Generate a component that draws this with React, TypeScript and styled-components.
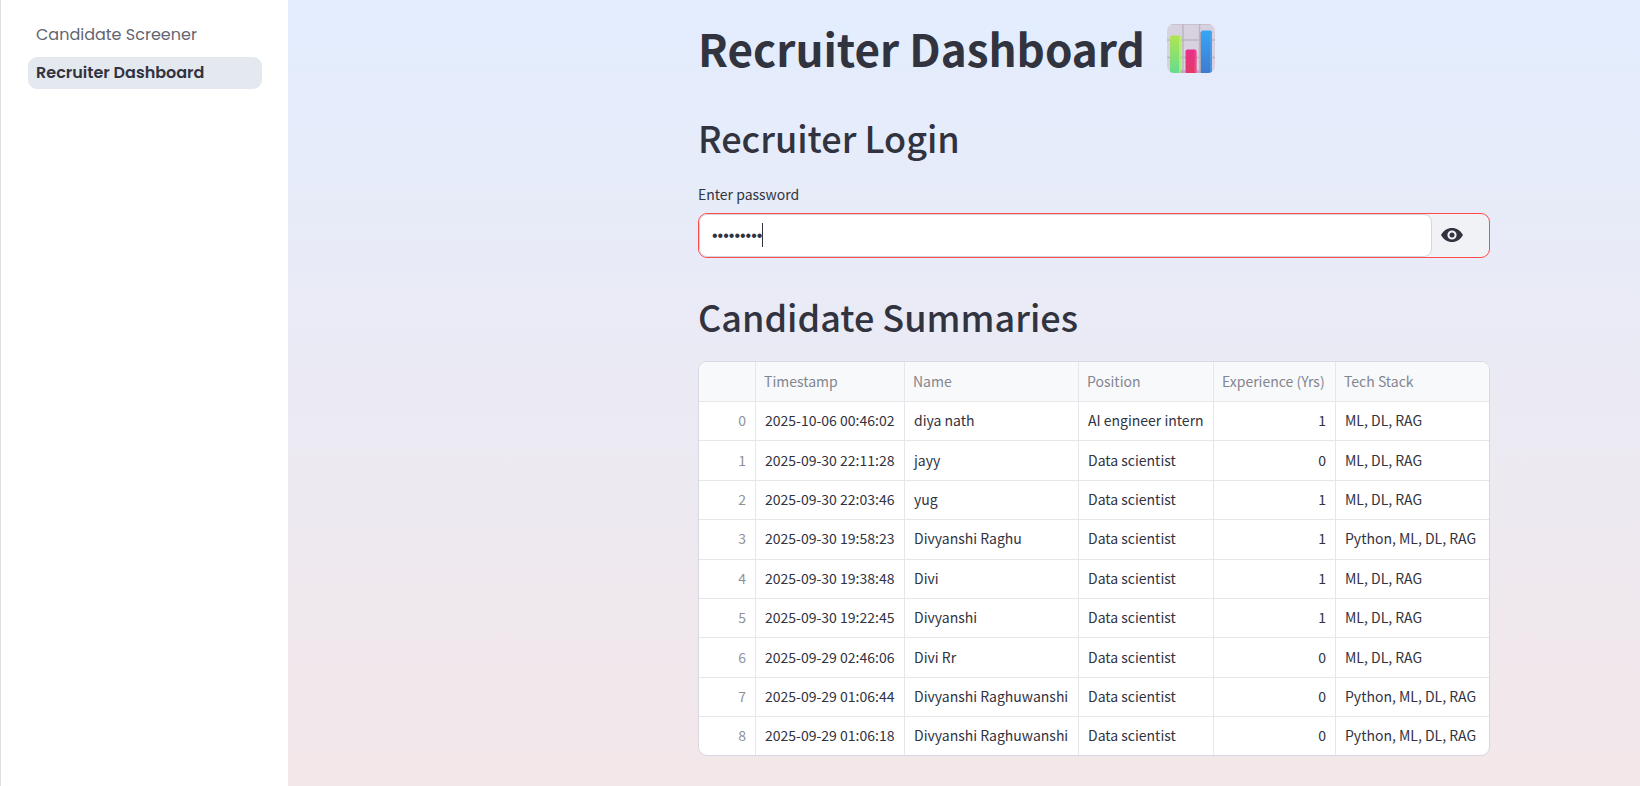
import React, { useState } from 'react';
import styled, { createGlobalStyle } from 'styled-components';

const sans = '"Noto Sans CJK SC", "Noto Sans", sans-serif';
const ink = '#31333f';

const GlobalStyle = createGlobalStyle`
  *, *::before, *::after { box-sizing: border-box; }
  body {
    margin: 0;
    color: ${ink};
    font-family: ${sans};
  }
`;

const Shell = styled.div`
  display: flex;
  min-height: 100vh;
  background: linear-gradient(to bottom, #e3edfe, #f3e7e9);
`;

const Sidebar = styled.aside`
  flex: 0 0 288px;
  padding: 19px 26px 19px 27px;
  border-left: 1px solid #dfe0e4;
  background: #ffffff;
`;

const NavList = styled.nav`
  display: flex;
  flex-direction: column;
  gap: 6px;
`;

const NavLink = styled.a<{ $active?: boolean }>`
  padding: 0 8px;
  border-radius: 9px;
  background: ${(p) => (p.$active ? '#e4e9f0' : 'transparent')};
  color: ${(p) => (p.$active ? ink : '#63656f')};
  font-family: Poppins, Inter, sans-serif;
  font-size: 16px;
  font-weight: ${(p) => (p.$active ? 600 : 400)};
  line-height: 32px;
  white-space: nowrap;
  text-decoration: none;
`;

const Main = styled.main`
  flex: 1;
  display: grid;
  grid-template-columns: 410fr minmax(0, 792px) 150fr;
  align-content: start;
  padding: 18px 0 20px;
`;

const Content = styled.div`
  grid-column: 2;
`;

const Title = styled.h1`
  display: flex;
  align-items: center;
  gap: 22px;
  margin: 0;
  font-size: 44px;
  font-weight: 700;
  line-height: 60px;
  white-space: nowrap;
`;

const SectionTitle = styled.h2<{ $top: number }>`
  margin: ${(p) => p.$top}px 0 0;
  font-size: 36px;
  font-weight: 500;
  line-height: 48px;
`;

const Label = styled.label`
  display: block;
  margin: 21px 0 7px;
  font-size: 14px;
  line-height: 24px;
`;

const PasswordBox = styled.div`
  display: flex;
  height: 45px;
  overflow: hidden;
  border: 1px solid #ff4b4b;
  border-radius: 9px;
  background: #f0f2f6;
`;

const Field = styled.div`
  position: relative;
  flex: 1;
`;

const PasswordInput = styled.input`
  width: 100%;
  height: 100%;
  padding: 0 12px;
  border: 1px solid #d3d6df;
  border-radius: 8px;
  outline: none;
  background: #ffffff;
  color: ${ink};
  caret-color: transparent;
  font-family: "Liberation Sans", sans-serif;
  font-size: 16px;
`;

const Caret = styled.span`
  position: absolute;
  top: 9px;
  left: 63px;
  width: 1px;
  height: 24px;
  background: ${ink};
`;

const RevealButton = styled.button`
  display: flex;
  align-items: center;
  width: 57px;
  padding: 0 0 2px 8px;
  border: 0;
  background: transparent;
  color: ${ink};
`;

const TableFrame = styled.div`
  margin-top: 21px;
  overflow: hidden;
  border: 1px solid #d8d8e2;
  border-radius: 9px;
  background: #ffffff;
`;

const Table = styled.table`
  width: 100%;
  height: 393px;
  border-collapse: separate;
  border-spacing: 0;
  table-layout: fixed;
  font-size: 14px;
  line-height: 20px;
`;

const Cell = styled.td<{ $end?: boolean; $muted?: boolean }>`
  padding: 0 9px 2px;
  border-right: 1px solid #e6e7ea;
  border-bottom: 1px solid #e6e7ea;
  color: ${(p) => (p.$muted ? '#8f929c' : ink)};
  font-weight: 400;
  text-align: ${(p) => (p.$end ? 'right' : 'left')};
  white-space: nowrap;

  &:last-child { border-right: 0; }
  tbody tr:last-child & { border-bottom: 0; }
`;

const HeadCell = styled(Cell)`
  height: 40px;
  padding: 0 8px 2px;
  background: #f8f9fb;
  color: #83868f;
`;

const widths = [57, 149, 174, 135, 122, undefined];
const headings = ['', 'Timestamp', 'Name', 'Position', 'Experience (Yrs)', 'Tech Stack'];

const candidates: [string, string, string, number, string][] = [
  ['2025-10-06 00:46:02', 'diya nath', 'AI engineer intern', 1, 'ML, DL, RAG'],
  ['2025-09-30 22:11:28', 'jayy', 'Data scientist', 0, 'ML, DL, RAG'],
  ['2025-09-30 22:03:46', 'yug', 'Data scientist', 1, 'ML, DL, RAG'],
  ['2025-09-30 19:58:23', 'Divyanshi Raghu', 'Data scientist', 1, 'Python, ML, DL, RAG'],
  ['2025-09-30 19:38:48', 'Divi', 'Data scientist', 1, 'ML, DL, RAG'],
  ['2025-09-30 19:22:45', 'Divyanshi', 'Data scientist', 1, 'ML, DL, RAG'],
  ['2025-09-29 02:46:06', 'Divi Rr', 'Data scientist', 0, 'ML, DL, RAG'],
  ['2025-09-29 01:06:44', 'Divyanshi Raghuwanshi', 'Data scientist', 0, 'Python, ML, DL, RAG'],
  ['2025-09-29 01:06:18', 'Divyanshi Raghuwanshi', 'Data scientist', 0, 'Python, ML, DL, RAG'],
];

function EyeIcon() {
  return (
    <svg width="24" height="24" viewBox="0 0 24 24" fill="currentColor" aria-hidden="true">
      <path
        fillRule="evenodd"
        d="M1 12C3.500 7.500 7.500 5 12 5S20.500 7.500 23 12C20.500 16.500 16.500 19 12 19S3.500 16.500 1 12ZM12 7.400A4.600 4.600 0 1 0 12 16.600A4.600 4.600 0 1 0 12 7.400Z"
      />
      <circle cx="12" cy="12" r="2.500" />
    </svg>
  );
}

function ChartIcon() {
  return (
    <svg width="48" height="49" viewBox="0 0 48 49" aria-hidden="true">
      <defs>
        <linearGradient id="green" x1="0" y1="0" x2="0" y2="1">
          <stop offset="0" stopColor="#b0e452" />
          <stop offset="1" stopColor="#62dc92" />
        </linearGradient>
        <linearGradient id="pink" x1="0" y1="0" x2="0" y2="1">
          <stop offset="0" stopColor="#ea2f8c" />
          <stop offset="1" stopColor="#e03b62" />
        </linearGradient>
        <linearGradient id="blue" x1="0" y1="0" x2="0" y2="1">
          <stop offset="0" stopColor="#35a6f6" />
          <stop offset="1" stopColor="#3f78cc" />
        </linearGradient>
        <clipPath id="tile"><rect width="48" height="49" rx="7" /></clipPath>
      </defs>
      <g clipPath="url(#tile)">
        <rect width="48" height="49" fill="#d8d1df" />
        <path d="M0 0.500H48" stroke="#c9c1cb" strokeWidth="1" />
        <path d="M16 0V49M32.5 0V49M0 16H48M0 33.5H48" stroke="#bcb5c4" strokeWidth="1.5" fill="none" />
        <path d="M14 46H18V49H14zM30 46H34V49H30z" fill="#c6a2dc" />
        <rect x="33" y="8" width="2" height="41" fill="#a8a4b8" />
        <rect x="3" y="11.5" width="11" height="40" rx="2" fill="url(#green)" />
        <rect x="12" y="13" width="2" height="36" fill="#c9f56c" opacity=".6" />
        <rect x="18.500" y="25.500" width="11" height="26" rx="2" fill="url(#pink)" />
        <rect x="27.500" y="27" width="2" height="22" fill="#f55a94" opacity=".6" />
        <rect x="34" y="6.500" width="11" height="45" rx="2" fill="url(#blue)" />
        <rect x="43" y="8" width="2" height="41" fill="#5aa8f4" opacity=".5" />
      </g>
    </svg>
  );
}

export default function App() {
  const [password, setPassword] = useState('recruiter');
  const [visible, setVisible] = useState(false);

  return (
    <>
      <GlobalStyle />
      <Shell>
        <Sidebar>
          <NavList aria-label="Pages">
            <NavLink href="#screener">Candidate Screener</NavLink>
            <NavLink href="#dashboard" $active aria-current="page">Recruiter Dashboard</NavLink>
          </NavList>
        </Sidebar>
        <Main>
          <Content>
            <Title>Recruiter Dashboard <ChartIcon /></Title>
            <SectionTitle $top={35}>Recruiter Login</SectionTitle>
            <Label htmlFor="password">Enter password</Label>
            <PasswordBox>
              <Field>
                <PasswordInput
                  id="password"
                  type={visible ? 'text' : 'password'}
                  value={password}
                  onChange={(e) => setPassword(e.target.value)}
                />
                <Caret />
              </Field>
              <RevealButton type="button" aria-label="Show password text" onClick={() => setVisible(!visible)}>
                <EyeIcon />
              </RevealButton>
            </PasswordBox>
            <SectionTitle $top={34}>Candidate Summaries</SectionTitle>
            <TableFrame>
              <Table>
                <colgroup>
                  {widths.map((w, i) => <col key={i} width={w} />)}
                </colgroup>
                <thead>
                  <tr>
                    {headings.map((h) => <HeadCell as="th" scope="col" key={h}>{h}</HeadCell>)}
                  </tr>
                </thead>
                <tbody>
                  {candidates.map(([time, name, position, years, stack], i) => (
                    <tr key={i}>
                      <Cell $end $muted>{i}</Cell>
                      <Cell>{time}</Cell>
                      <Cell>{name}</Cell>
                      <Cell>{position}</Cell>
                      <Cell $end>{years}</Cell>
                      <Cell>{stack}</Cell>
                    </tr>
                  ))}
                </tbody>
              </Table>
            </TableFrame>
          </Content>
        </Main>
      </Shell>
    </>
  );
}
